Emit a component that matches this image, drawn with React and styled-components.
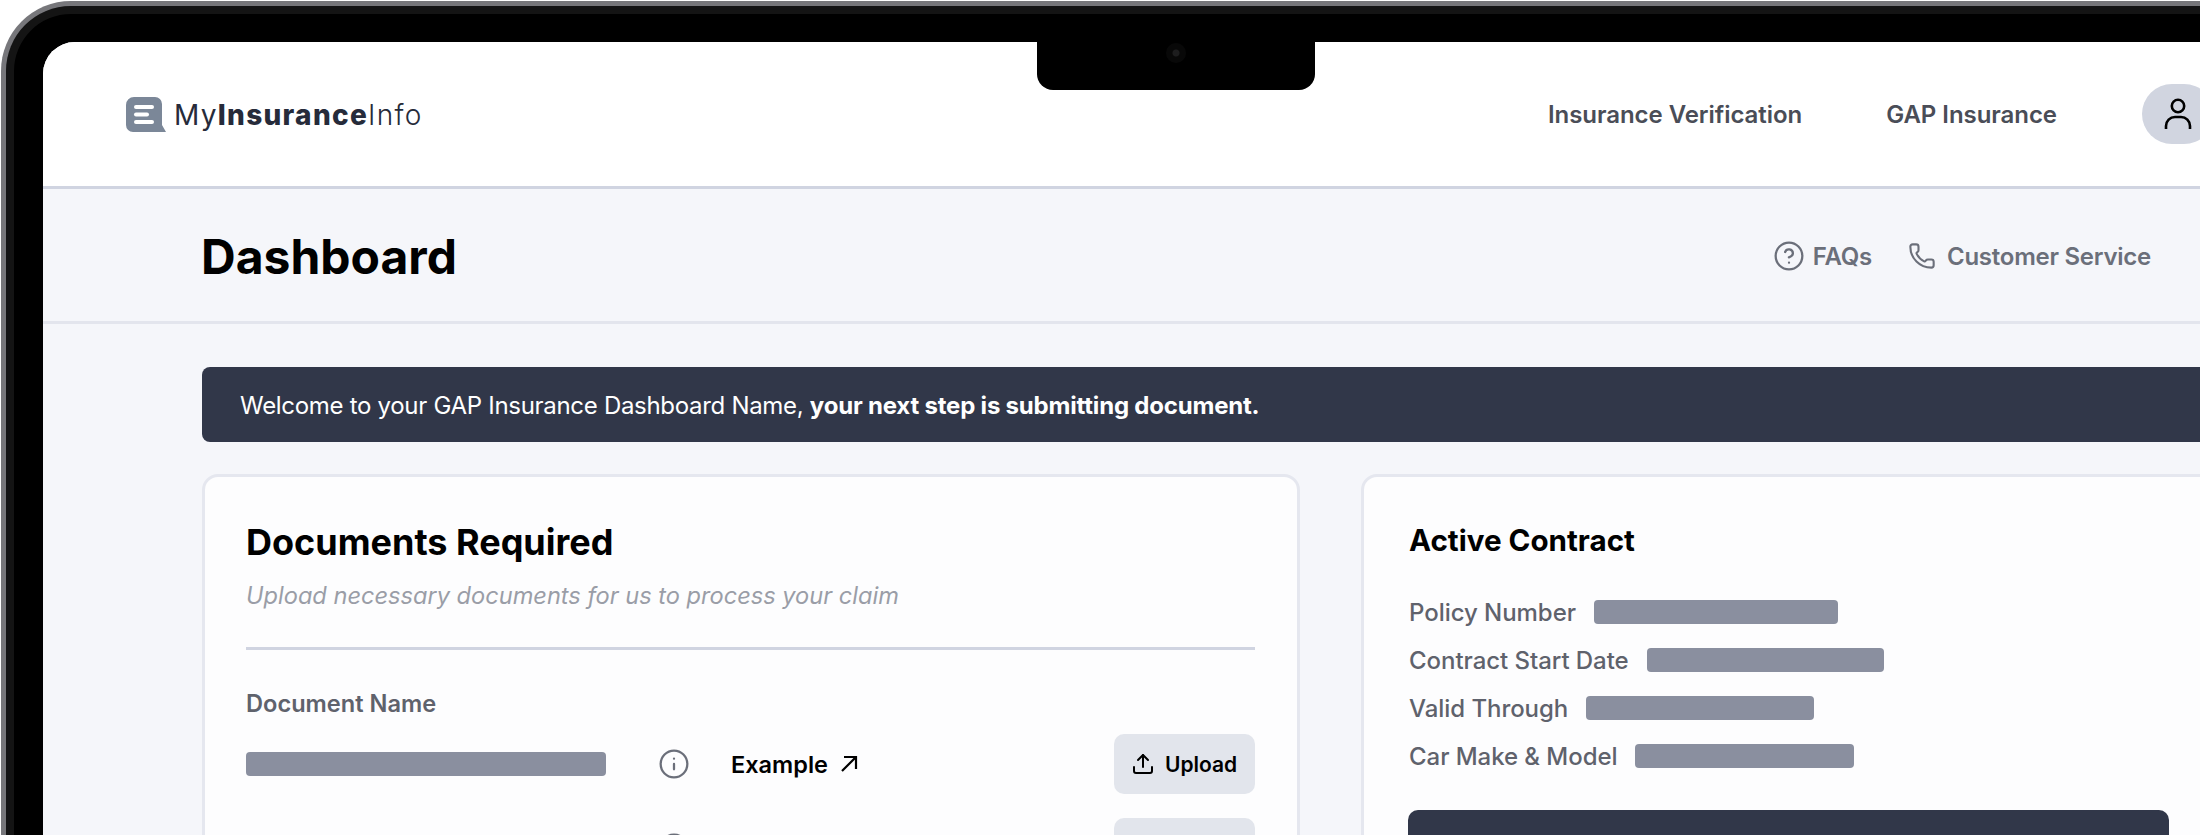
import React from 'react'
import styled, { createGlobalStyle } from 'styled-components'
import { CircleHelp, Phone, Info, Upload } from 'lucide-react'

const GlobalStyle = createGlobalStyle`
  html, body {
    margin: 0;
    padding: 0;
    height: 835px;
    overflow: hidden;
    background: #fff;
  }
  * { box-sizing: border-box; }
  body { font-family: Inter, "Liberation Sans", sans-serif; }
`

const Stage = styled.div`
  width: 2200px;
  height: 835px;
  overflow: hidden;
  background: #fff;
`

const Bezel = styled.div`
  position: relative;
  width: 2350px;
  height: 900px;
  margin: 1px 0 0 1px;
  padding: 36px 0 0 37px;
  background: #000;
  border: 5px solid #77777b;
  border-bottom: 0;
  border-radius: 70px 70px 0 0;
  box-shadow: inset 0 0 0 8px #141414;
`

const Notch = styled.div`
  position: absolute;
  top: 36px;
  left: 1031px;
  width: 278px;
  height: 48px;
  background: #000;
  border-radius: 0 0 16px 16px;
  display: flex;
  justify-content: center;
  padding-top: 1px;
`

const Camera = styled.div`
  width: 20px;
  height: 20px;
  border-radius: 50%;
  background: radial-gradient(circle, #1d1d1e 0 3px, #080808 4px 10px);
`

const Screen = styled.div`
  width: 2266px;
  height: 860px;
  background: #f5f6fa;
  border-radius: 32px 32px 0 0;
  overflow: hidden;
`

const Header = styled.header`
  height: 147px;
  padding: 0 95px 0 83px;
  display: flex;
  align-items: center;
  justify-content: space-between;
  background: #fff;
  border-bottom: 3px solid #d0d4e1;
`

const Logo = styled.div`
  display: flex;
  align-items: center;
  gap: 8px;
`

const LogoText = styled.div`
  padding-top: 2px;
  font-size: 28px;
  letter-spacing: 1.3px;
  color: #262b3a;
  font-weight: 400;
  b { font-weight: 800; }
  span { font-weight: 300; }
`

const Nav = styled.nav`
  display: flex;
  align-items: center;
`

const NavLink = styled.a`
  font-size: 24px;
  font-weight: 600;
  letter-spacing: -0.05px;
  color: #4a4d57;
  margin-right: ${p => p.$gap}px;
`

const Avatar = styled.div`
  width: 72px;
  height: 60px;
  border-radius: 30px;
  background: #d1d5e0;
  display: flex;
  align-items: center;
  justify-content: center;
`

const TitleBar = styled.div`
  height: 135px;
  padding: 2px 158px 0 158px;
  display: flex;
  align-items: center;
  justify-content: space-between;
  border-bottom: 3px solid #e3e5ed;
`

const PageTitle = styled.h1`
  margin: 0;
  font-size: 48px;
  font-weight: 700;
  color: #000;
`

const HelpLinks = styled.div`
  display: flex;
  align-items: center;
  gap: 36px;
`

const HelpLink = styled.a`
  display: flex;
  align-items: center;
  gap: ${p => p.$gap}px;
  font-size: 24px;
  font-weight: 600;
  letter-spacing: -0.25px;
  color: #6b6f7a;
`

const Main = styled.main`
  padding: 43px 90px 0 159px;
`

const Banner = styled.div`
  height: 75px;
  padding: 2px 38px 0;
  display: flex;
  align-items: center;
  background: #313749;
  border-radius: 8px;
  color: #fff;
  font-size: 24px;
  letter-spacing: -0.3px;
  white-space: pre;
  b { font-weight: 700; letter-spacing: -0.2px; }
`

const Columns = styled.div`
  margin-top: 32px;
  display: grid;
  grid-template-columns: 1098px 1fr;
  gap: 61px;
`

const Card = styled.section`
  height: 500px;
  padding: ${p => p.$pad};
  background: #fdfdfe;
  border: 3px solid #e5e7ef;
  border-radius: 16px;
`

const CardTitle = styled.h2`
  margin: 0;
  font-size: 36px;
  line-height: 44px;
  font-weight: 700;
  color: #000;
`

const Subtitle = styled.p`
  margin: 15px 0 0;
  padding-bottom: 34px;
  font-size: 23.6px;
  line-height: 34px;
  font-style: italic;
  color: #9a9da7;
  border-bottom: 3px solid #d0d4e1;
`

const ColumnLabel = styled.div`
  margin-top: 39px;
  font-size: 23.6px;
  line-height: 30px;
  font-weight: 600;
  color: #5f626c;
`

const DocRow = styled.div`
  height: 60px;
  margin-top: ${p => p.$top}px;
  display: grid;
  grid-template-columns: 412px 73px 1fr auto;
  align-items: center;
`

const Redacted = styled.div`
  width: ${p => p.$w}px;
  height: 24px;
  background: #8a8f9f;
  border-radius: 4px;
`

const InfoCell = styled.div`
  display: flex;
  color: #6b6f7a;
`

const ExampleLink = styled.a`
  display: flex;
  align-items: center;
  gap: 12px;
  font-size: 23.5px;
  font-weight: 600;
  color: #000;
`

const UploadButton = styled.button`
  width: 141px;
  height: 60px;
  display: flex;
  align-items: center;
  gap: 10px;
  padding: 0 0 0 17px;
  border: 0;
  border-radius: 10px;
  background: #e2e5ec;
  color: #000;
  font-family: inherit;
  font-size: 21px;
  font-weight: 600;
`

const ContractTitle = styled.h3`
  margin: 0;
  font-size: 29.6px;
  line-height: 40px;
  font-weight: 700;
  color: #000;
`

const ContractList = styled.div`
  margin-top: 40px;
  display: flex;
  flex-direction: column;
  gap: 24px;
`

const ContractRow = styled.div`
  display: flex;
  align-items: center;
  gap: 18px;
  height: 24px;
  font-size: 24px;
  font-weight: 500;
  letter-spacing: -0.05px;
  color: #5f626c;
`

const ActionButton = styled.div`
  margin-top: 42px;
  height: 64px;
  margin-left: -1px;
  background: #313749;
  border-radius: 10px;
`

const contract = [
  ['Policy Number', 244],
  ['Contract Start Date', 237],
  ['Valid Through', 228],
  ['Car Make & Model', 219],
]

function LogoMark() {
  return (
    <svg width="40" height="35" viewBox="0 0 40 35">
      <path d="M8 0h21a7 7 0 0 1 7 7v21l4 7H7a7 7 0 0 1-7-7V8a8 8 0 0 1 8-8z" fill="#7b8798" />
      <rect x="8" y="8" width="20" height="4" rx="2" fill="#fff" />
      <rect x="8" y="15.5" width="15" height="4" rx="2" fill="#fff" />
      <rect x="8" y="23" width="20" height="4" rx="2" fill="#fff" />
    </svg>
  )
}

function UserIcon() {
  return (
    <svg width="28" height="32" viewBox="0 0 28 32" fill="none" stroke="#000" strokeWidth="2.6">
      <circle cx="14" cy="8" r="6.2" />
      <path d="M2 31v-3a9 9 0 0 1 9-9h6a9 9 0 0 1 9 9v3" />
    </svg>
  )
}

function ArrowIcon() {
  return (
    <svg width="18" height="18" viewBox="0 0 18 18" fill="none" stroke="#000" strokeWidth="2.2">
      <path d="M2 16L16 2M4 2h12v12" />
    </svg>
  )
}

// the second row only peeks in at the bottom edge, its texts are below the fold
function DocumentRow({ top, width, cut }) {
  return (
    <DocRow $top={top}>
      <Redacted $w={width} />
      <InfoCell><Info size={32} strokeWidth={1.7} /></InfoCell>
      <ExampleLink>{!cut && 'Example'} {!cut && <ArrowIcon />}</ExampleLink>
      <UploadButton>{!cut && <Upload size={24} strokeWidth={2} />}{!cut && 'Upload'}</UploadButton>
    </DocRow>
  )
}

export default function App() {
  return (
    <Stage>
      <GlobalStyle />
      <Bezel>
        <Notch><Camera /></Notch>
        <Screen>
          <Header>
            <Logo>
              <LogoMark />
              <LogoText>My<b>Insurance</b><span>Info</span></LogoText>
            </Logo>
            <Nav>
              <NavLink $gap={84}>Insurance Verification</NavLink>
              <NavLink $gap={85}>GAP Insurance</NavLink>
              <Avatar><UserIcon /></Avatar>
            </Nav>
          </Header>
          <TitleBar>
            <PageTitle>Dashboard</PageTitle>
            <HelpLinks>
              <HelpLink $gap={8}><CircleHelp size={32} strokeWidth={1.7} />FAQs</HelpLink>
              <HelpLink $gap={11}><Phone size={28} strokeWidth={1.8} />Customer Service</HelpLink>
            </HelpLinks>
          </TitleBar>
          <Main>
            <Banner>Welcome to your GAP Insurance Dashboard Name, <b>your next step is submitting document.</b></Banner>
            <Columns>
              <Card $pad="43px 42px 0 41px">
                <CardTitle>Documents Required</CardTitle>
                <Subtitle>Upload necessary documents for us to process your claim</Subtitle>
                <ColumnLabel>Document Name</ColumnLabel>
                <DocumentRow top={15} width={360} />
                <DocumentRow top={24} width={300} cut />
              </Card>
              <Card $pad="43px 47px 0 45px">
                <ContractTitle>Active Contract</ContractTitle>
                <ContractList>
                  {contract.map(([label, width]) => (
                    <ContractRow key={label}>{label}<Redacted $w={width} /></ContractRow>
                  ))}
                </ContractList>
                <ActionButton />
              </Card>
            </Columns>
          </Main>
        </Screen>
      </Bezel>
    </Stage>
  )
}
